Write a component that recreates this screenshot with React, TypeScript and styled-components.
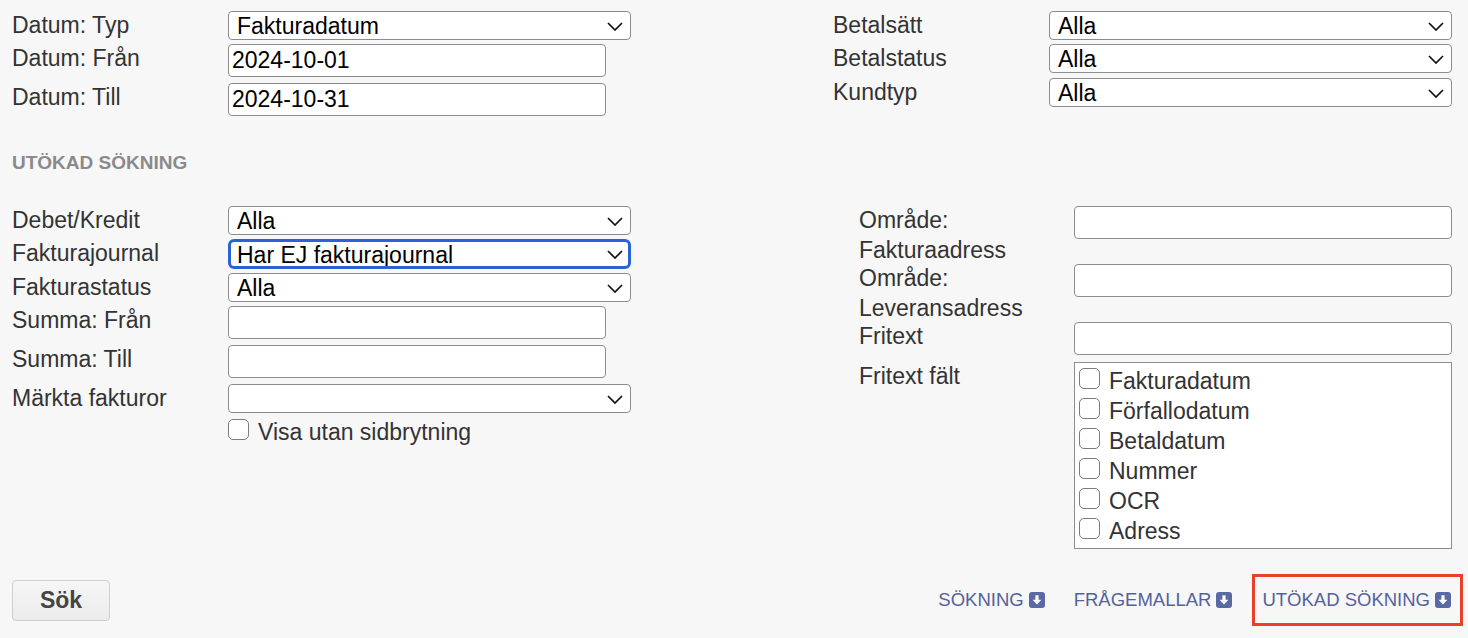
import * as React from "react";
import styled, { createGlobalStyle } from "styled-components";

const GlobalStyle = createGlobalStyle`
  html, body {
    margin: 0;
    padding: 0;
    background: #f7f7f7;
  }
  body {
    font-family: "Liberation Sans", Arial, Helvetica, sans-serif;
  }
`;

const Page = styled.div`
  width: 1468px;
  height: 638px;
  box-sizing: border-box;
  padding: 11px 0 0 12px;
  display: flex;
  flex-direction: column;
  color: #333;
  overflow: hidden;
`;

const Section = styled.div`
  display: flex;
  justify-content: space-between;
  align-items: flex-start;
  padding-right: 16px;
`;

const Column = styled.div<{ $width: number }>`
  width: ${({ $width }) => $width}px;
  display: flex;
  flex-direction: column;
`;

const Row = styled.div<{ $after?: number }>`
  display: flex;
  align-items: flex-start;
  margin-bottom: ${({ $after }) => ($after ?? 4)}px;
`;

const Label = styled.div<{ $width: number }>`
  width: ${({ $width }) => $width}px;
  flex: none;
  font-size: 23px;
  line-height: 30px;
  margin: -1px 0 -1px;
  color: #333;
`;

const Control = styled.div`
  display: flex;
  flex-direction: column;
  flex: 1;
  min-width: 0;
`;

const SelectWrap = styled.div`
  position: relative;
  width: 100%;
`;

const Select = styled.select<{ $focused?: boolean }>`
  appearance: none;
  -webkit-appearance: none;
  display: block;
  width: 100%;
  height: ${({ $focused }) => ($focused ? 30 : 29)}px;
  box-sizing: border-box;
  border: ${({ $focused }) => ($focused ? "3px solid #2a63d8" : "1px solid #8d8d8d")};
  border-radius: ${({ $focused }) => ($focused ? 6 : 4)}px;
  background: #fff;
  color: #000;
  font-family: "Liberation Sans", Arial, sans-serif;
  font-size: 23px;
  line-height: 26px;
  padding: 0 30px 0 ${({ $focused }) => ($focused ? 6 : 8)}px;
  outline: none;
`;

const Chevron = styled.svg`
  position: absolute;
  right: 8px;
  top: 50%;
  margin-top: -4px;
  pointer-events: none;
`;

const TextInput = styled.input<{ $width: number }>`
  display: block;
  width: ${({ $width }) => $width}px;
  height: 33px;
  box-sizing: border-box;
  border: 1px solid #8d8d8d;
  border-radius: 4px;
  background: #fff;
  color: #000;
  font-family: "Liberation Sans", Arial, sans-serif;
  font-size: 23px;
  padding: 0 3px;
  margin-bottom: 2px;
  outline: none;
`;

const Heading = styled.div`
  font-size: 19px;
  line-height: 22px;
  font-weight: bold;
  color: #8a8a8a;
  margin: 30px 0 32px;
`;

const CheckRow = styled.label`
  display: flex;
  align-items: center;
  gap: 9px;
  font-size: 23px;
  line-height: 30px;
  color: #333;
`;

const Check = styled.input`
  appearance: none;
  -webkit-appearance: none;
  flex: none;
  width: 21px;
  height: 21px;
  margin: 0 0 5px;
  box-sizing: border-box;
  border: 1.5px solid #7c7c7c;
  border-radius: 5px;
  background: #fff;
`;

const FieldList = styled.div`
  width: 378px;
  height: 187px;
  box-sizing: border-box;
  border: 1px solid #8d8d8d;
  background: #fff;
  padding: 3px 4px 0;
  overflow: hidden;
`;

const BottomBar = styled.div`
  margin-top: auto;
  height: 52px;
  margin-bottom: 12px;
  padding-right: 5px;
  display: flex;
  align-items: center;
  justify-content: space-between;
`;

const SearchButton = styled.button`
  width: 98px;
  height: 41px;
  border: 1px solid #cfcfcf;
  border-radius: 4px;
  background: linear-gradient(#f6f6f6, #ebebeb);
  color: #444;
  font-family: "Liberation Sans", Arial, sans-serif;
  font-size: 23px;
  font-weight: bold;
  padding: 0;
`;

const Links = styled.div`
  display: flex;
  align-items: center;
  gap: 29px;
`;

const ToggleLink = styled.a<{ $highlighted?: boolean }>`
  display: flex;
  align-items: center;
  gap: 5px;
  font-size: 18.5px;
  color: #53629c;
  text-decoration: none;
  cursor: pointer;
  box-sizing: border-box;
  height: ${({ $highlighted }) => ($highlighted ? "52px" : "auto")};
  border: ${({ $highlighted }) => ($highlighted ? "3px solid #e8402b" : "none")};
  padding: ${({ $highlighted }) => ($highlighted ? "0 9px 0 7px" : "0")};
  margin-left: ${({ $highlighted }) => ($highlighted ? "-9px" : "0")};
`;

function ChevronIcon() {
  return (
    <Chevron width="16" height="9" viewBox="0 0 16 9">
      <polyline points="1,1 8,8 15,1" fill="none" stroke="#111" strokeWidth="1.7" />
    </Chevron>
  );
}

function DropDown({ value, focused }: { value: string; focused?: boolean }) {
  return (
    <SelectWrap>
      <Select $focused={focused} defaultValue={value}>
        <option value={value}>{value}</option>
      </Select>
      <ChevronIcon />
    </SelectWrap>
  );
}

function DownIcon() {
  return (
    <svg width="16" height="16" viewBox="0 0 16 16">
      <rect x="0" y="0" width="16" height="16" rx="3" fill="#5a68a3" />
      <path d="M6.4 3.2h3.2v4.6h2.8L8 12.6 3.6 7.8h2.8z" fill="#fff" />
    </svg>
  );
}

const fritextFields = [
  "Fakturadatum",
  "Förfallodatum",
  "Betaldatum",
  "Nummer",
  "OCR",
  "Adress",
  "Postnummer",
];

export default function App() {
  return (
    <>
      <GlobalStyle />
      <Page>
        <Section>
          <Column $width={619}>
            <Row>
              <Label $width={216}>Datum: Typ</Label>
              <Control>
                <DropDown value="Fakturadatum" />
              </Control>
            </Row>
            <Row>
              <Label $width={216}>Datum: Från</Label>
              <Control>
                <TextInput $width={378} defaultValue="2024-10-01" />
              </Control>
            </Row>
            <Row>
              <Label $width={216}>Datum: Till</Label>
              <Control>
                <TextInput $width={378} defaultValue="2024-10-31" />
              </Control>
            </Row>
          </Column>
          <Column $width={619}>
            <Row>
              <Label $width={216}>Betalsätt</Label>
              <Control>
                <DropDown value="Alla" />
              </Control>
            </Row>
            <Row $after={5}>
              <Label $width={216}>Betalstatus</Label>
              <Control>
                <DropDown value="Alla" />
              </Control>
            </Row>
            <Row>
              <Label $width={216}>Kundtyp</Label>
              <Control>
                <DropDown value="Alla" />
              </Control>
            </Row>
          </Column>
        </Section>

        <Heading>UTÖKAD SÖKNING</Heading>

        <Section>
          <Column $width={619}>
            <Row>
              <Label $width={216}>Debet/Kredit</Label>
              <Control>
                <DropDown value="Alla" />
              </Control>
            </Row>
            <Row>
              <Label $width={216}>Fakturajournal</Label>
              <Control>
                <DropDown value="Har EJ fakturajournal" focused />
              </Control>
            </Row>
            <Row>
              <Label $width={216}>Fakturastatus</Label>
              <Control>
                <DropDown value="Alla" />
              </Control>
            </Row>
            <Row>
              <Label $width={216}>Summa: Från</Label>
              <Control>
                <TextInput $width={378} />
              </Control>
            </Row>
            <Row>
              <Label $width={216}>Summa: Till</Label>
              <Control>
                <TextInput $width={378} />
              </Control>
            </Row>
            <Row>
              <Label $width={216}>Märkta fakturor</Label>
              <Control>
                <DropDown value="" />
              </Control>
            </Row>
            <Row>
              <Label $width={216} />
              <Control>
                <CheckRow>
                  <Check type="checkbox" />
                  Visa utan sidbrytning
                </CheckRow>
              </Control>
            </Row>
          </Column>
          <Column $width={593}>
            <Row $after={0}>
              <Label $width={215}>
                Område:
                <br />
                Fakturaadress
              </Label>
              <Control>
                <TextInput $width={378} />
              </Control>
            </Row>
            <Row $after={0}>
              <Label $width={215}>
                Område:
                <br />
                Leveransadress
              </Label>
              <Control>
                <TextInput $width={378} />
              </Control>
            </Row>
            <Row $after={5}>
              <Label $width={215}>Fritext</Label>
              <Control>
                <TextInput $width={378} />
              </Control>
            </Row>
            <Row>
              <Label $width={215}>Fritext fält</Label>
              <Control>
                <FieldList>
                  {fritextFields.map((field) => (
                    <CheckRow key={field}>
                      <Check type="checkbox" />
                      {field}
                    </CheckRow>
                  ))}
                </FieldList>
              </Control>
            </Row>
          </Column>
        </Section>

        <BottomBar>
          <SearchButton>Sök</SearchButton>
          <Links>
            <ToggleLink>
              SÖKNING <DownIcon />
            </ToggleLink>
            <ToggleLink>
              FRÅGEMALLAR <DownIcon />
            </ToggleLink>
            <ToggleLink $highlighted>
              UTÖKAD SÖKNING <DownIcon />
            </ToggleLink>
          </Links>
        </BottomBar>
      </Page>
    </>
  );
}
